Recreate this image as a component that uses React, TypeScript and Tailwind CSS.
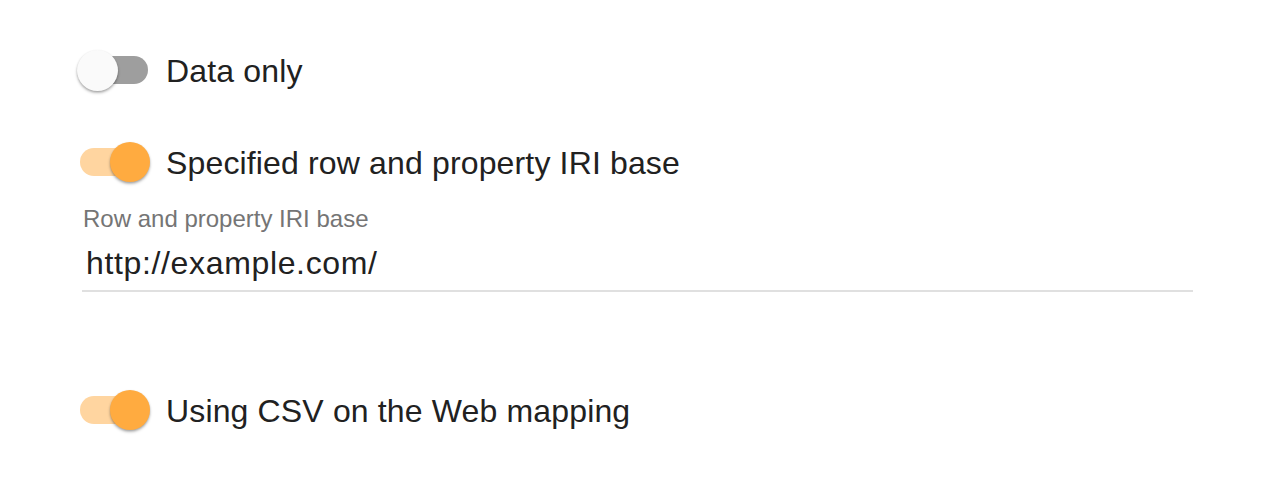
import React from "react";

function Switch({ on }: { on: boolean }) {
  return (
    <div className="relative w-[68px] h-[28px]">
      <div
        className={
          on
            ? "absolute inset-0 rounded-full bg-[#ffd5a0]"
            : "absolute inset-0 rounded-full bg-[#9e9e9e]"
        }
      />
      <div
        className={
          on
            ? "absolute top-[-6px] left-[30px] w-[40px] h-[40px] rounded-full bg-[#ffab40] shadow-[0_2px_3px_rgba(0,0,0,0.25),0_1px_2px_rgba(0,0,0,0.15)]"
            : "absolute top-[-6px] left-[-3px] w-[41px] h-[41px] rounded-full bg-[#fafafa] shadow-[0_2px_3px_rgba(0,0,0,0.25),0_1px_2px_rgba(0,0,0,0.15)]"
        }
      />
    </div>
  );
}

function Row({ on, label }: { on: boolean; label: string }) {
  return (
    <div className="flex items-center h-[48px]">
      <div className="w-[86px] flex items-center">
        <Switch on={on} />
      </div>
      <span className="text-[32px] leading-[48px] tracking-[0.15px] text-[#212121] pt-[1px]">{label}</span>
    </div>
  );
}

export default function App() {
  return (
    <div
      className="w-[1276px] h-[486px] bg-white pl-[80px] pt-[46px]"
      style={{ fontFamily: '"Liberation Sans", Arial, sans-serif' }}
    >
      <Row on={false} label="Data only" />
      <div className="mt-[44px]">
        <Row on={true} label="Specified row and property IRI base" />
      </div>
      <div className="mt-[19px] ml-[2px] w-[1111px]">
        <div className="text-[24px] leading-[28px] text-[#757575] ml-[1px]">
          Row and property IRI base
        </div>
        <div className="mt-[10px] pb-[7px] border-b-2 border-[#e0e0e0]">
          <div className="text-[32px] leading-[40px] tracking-[0.65px] text-[#212121] ml-[4px]">
            http://example.com/
          </div>
        </div>
      </div>
      <div className="mt-[94px]">
        <Row on={true} label="Using CSV on the Web mapping" />
      </div>
    </div>
  );
}
